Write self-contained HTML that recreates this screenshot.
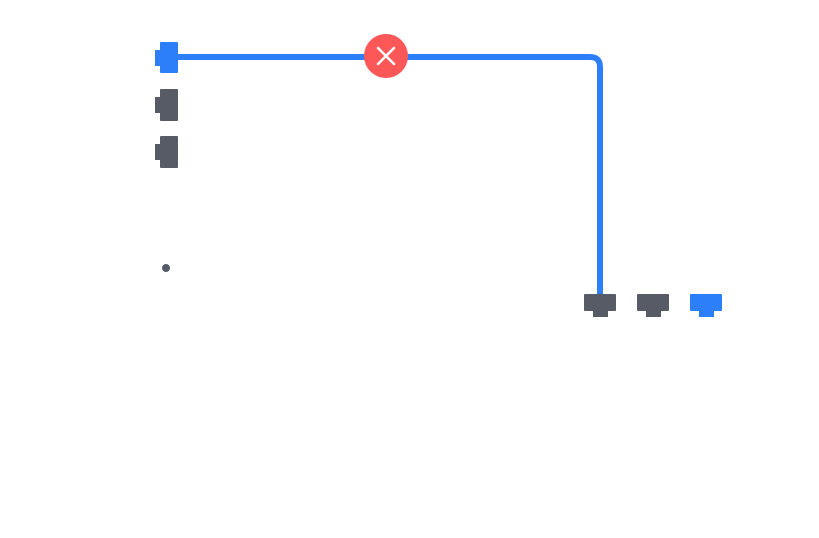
<!DOCTYPE html>
<html><head><meta charset="utf-8"><style>html,body{margin:0;padding:0;background:#fff;width:819px;height:538px;overflow:hidden}</style></head>
<body>
<svg width="819" height="538" viewBox="0 0 819 538" xmlns="http://www.w3.org/2000/svg">
<path d="M176 57 H590 Q600 57 600 67 V298" fill="none" stroke="#2d7ff9" stroke-width="6"/>
<g fill="#2d7ff9"><rect x="160" y="42" width="18" height="31" rx="1"/><rect x="155" y="50" width="6" height="16"/></g>
<g fill="#575b66">
<rect x="160" y="89" width="18" height="32" rx="1"/><rect x="155" y="97" width="6" height="16"/>
<rect x="160" y="136" width="18" height="32" rx="1"/><rect x="155" y="144" width="6" height="16"/>
<circle cx="166" cy="268" r="4"/>
<rect x="584" y="294" width="32" height="17" rx="1"/><rect x="593" y="310" width="15" height="7"/>
<rect x="637" y="294" width="32" height="17" rx="1"/><rect x="646" y="310" width="15" height="7"/>
</g>
<g fill="#2d7ff9"><rect x="690" y="294" width="32" height="17" rx="1"/><rect x="699" y="310" width="15" height="7"/></g>
<circle cx="386" cy="56" r="22" fill="#fd5757"/>
<path d="M378 48 L394 64 M394 48 L378 64" stroke="#fff" stroke-width="2.5" stroke-linecap="round"/>
</svg>
</body></html>
